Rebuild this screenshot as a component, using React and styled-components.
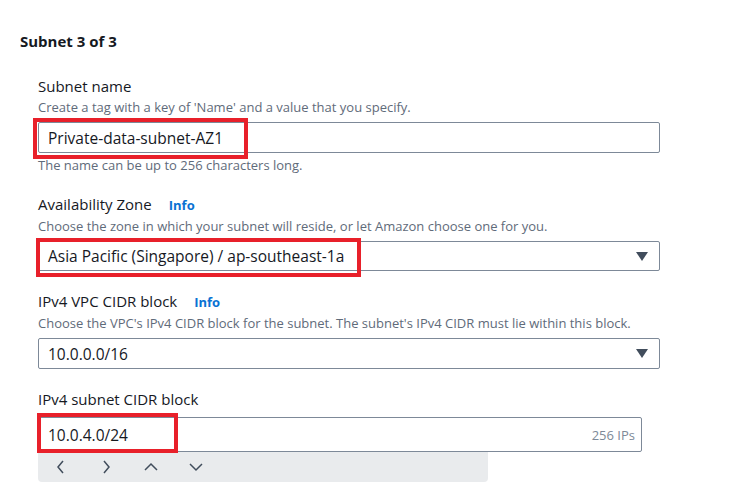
import styled, { createGlobalStyle } from "styled-components";

const GlobalStyle = createGlobalStyle`
  html, body {
    margin: 0;
    padding: 0;
    background: #ffffff;
  }
  body {
    font-family: "Open Sans", "Noto Sans", Arial, sans-serif;
    color: #16191f;
  }
`;

const Page = styled.div`
  width: 731px;
  height: 497px;
  overflow: hidden;
  padding: 30px 0 0 20px;
  box-sizing: border-box;
`;

const Heading = styled.h2`
  margin: 0 0 23px 0;
  font-size: 15px;
  font-weight: 700;
  line-height: 22px;
  color: #16191f;
`;

const Fields = styled.div`
  display: flex;
  flex-direction: column;
  gap: 19px;
  padding-left: 18px;
`;

const Field = styled.div`
  display: flex;
  flex-direction: column;
`;

const Label = styled.div`
  display: flex;
  align-items: baseline;
  gap: 17px;
  font-size: 15px;
  line-height: 22px;
  color: #16191f;
  margin-bottom: ${({ $gap }) => $gap || "0"};
`;

const Info = styled.span`
  color: #0972d3;
  font-weight: 700;
  font-size: 13px;
`;

const Description = styled.div`
  font-size: 13px;
  line-height: 18px;
  color: #5f6b7a;
  margin: 1px 0 6px 0;
`;

const Hint = styled.div`
  font-size: 13px;
  line-height: 18px;
  color: #5f6b7a;
  margin-top: 3px;
`;

const Control = styled.div`
  position: relative;
  width: ${({ $width }) => $width || "622px"};
  height: ${({ $height }) => $height || "31px"};
  box-sizing: border-box;
  border: 1px solid #7d8998;
  border-radius: 2px;
  background: #fff;
  display: flex;
  align-items: center;
  padding: 0 ${({ $right }) => $right || "11px"} 0 9px;
  font-size: 15.5px;
  color: #16191f;
`;

const Value = styled.span`
  flex: 1;
`;

const Suffix = styled.span`
  color: #7d8998;
  font-size: 13px;
`;

const Caret = styled.span`
  width: 0;
  height: 0;
  border-left: 6px solid transparent;
  border-right: 6px solid transparent;
  border-top: 9px solid #414d5c;
`;

const Highlight = styled.div`
  position: absolute;
  left: ${({ $left }) => $left};
  top: ${({ $top }) => $top};
  width: ${({ $w }) => $w};
  height: ${({ $h }) => $h};
  border: 4px solid #e8202a;
  box-sizing: border-box;
  pointer-events: none;
`;

const Toolbar = styled.div`
  width: 450px;
  height: 30px;
  background: #e9ebed;
  border-radius: 0 0 4px 4px;
  display: flex;
  align-items: center;
  box-sizing: border-box;
`;

const ToolButton = styled.span`
  width: 45px;
  display: flex;
  justify-content: center;
`;

const Chevron = ({ d }) => (
  <svg width="14" height="14" viewBox="0 0 14 14">
    <path d={d} fill="none" stroke="#414d5c" strokeWidth="1.5" />
  </svg>
);

export default function App() {
  return (
    <>
      <GlobalStyle />
      <Page>
        <Heading>Subnet 3 of 3</Heading>
        <Fields>
          <Field>
            <Label>Subnet name</Label>
            <Description>
              Create a tag with a key of 'Name' and a value that you specify.
            </Description>
            <Control>
              <Value>Private-data-subnet-AZ1</Value>
              <Highlight $left="-6px" $top="-5px" $w="215px" $h="41px" />
            </Control>
            <Hint>The name can be up to 256 characters long.</Hint>
          </Field>
          <Field>
            <Label>
              Availability Zone <Info>Info</Info>
            </Label>
            <Description>
              Choose the zone in which your subnet will reside, or let Amazon
              choose one for you.
            </Description>
            <Control $height="30px">
              <Value>Asia Pacific (Singapore) / ap-southeast-1a</Value>
              <Caret />
              <Highlight $left="-3px" $top="-4px" $w="325px" $h="39px" />
            </Control>
          </Field>
          <Field>
            <Label>
              IPv4 VPC CIDR block <Info>Info</Info>
            </Label>
            <Description>
              Choose the VPC's IPv4 CIDR block for the subnet. The subnet's IPv4
              CIDR must lie within this block.
            </Description>
            <Control>
              <Value>10.0.0.0/16</Value>
              <Caret />
            </Control>
          </Field>
          <Field>
            <Label $gap="7px">IPv4 subnet CIDR block</Label>
            <Control $width="604px" $height="35px" $right="6px">
              <Value>10.0.4.0/24</Value>
              <Suffix>256 IPs</Suffix>
              <Highlight $left="-2px" $top="-5px" $w="141px" $h="40px" />
            </Control>
            <Toolbar>
              <ToolButton>
                <Chevron d="M9 1 L4 7 L9 13" />
              </ToolButton>
              <ToolButton>
                <Chevron d="M5 1 L10 7 L5 13" />
              </ToolButton>
              <ToolButton>
                <Chevron d="M1 10 L7 4 L13 10" />
              </ToolButton>
              <ToolButton>
                <Chevron d="M1 4 L7 10 L13 4" />
              </ToolButton>
            </Toolbar>
          </Field>
        </Fields>
      </Page>
    </>
  );
}
